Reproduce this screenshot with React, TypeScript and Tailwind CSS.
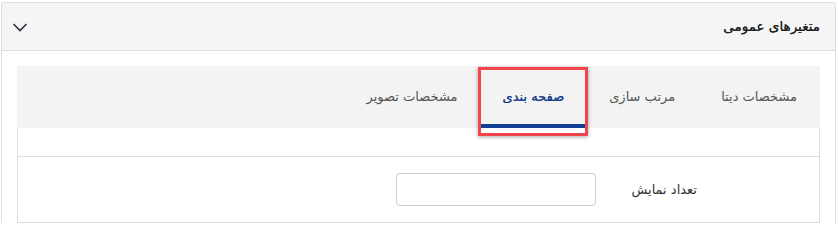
import { useState } from "react";

const tabs = [
  { id: "data", label: "مشخصات دیتا" },
  { id: "sort", label: "مرتب سازی" },
  { id: "paging", label: "صفحه بندی" },
  { id: "image", label: "مشخصات تصویر" },
];

const App = () => {
  const [active, setActive] = useState("paging");
  const [count, setCount] = useState("");

  return (
    <div
      dir="rtl"
      className="min-h-[227px] bg-white pt-[2px] pr-[2px] pl-[1px] text-[#333] font-['DejaVu_Sans',sans-serif]"
    >
      <div className="rounded-t-[3px] border border-b-0 border-[#dddddd]">
        {/* header */}
        <div className="flex h-[48px] items-center justify-between border-b border-[#dddddd] bg-[#f5f5f5] pr-[15px] pl-[10px]">
          <span className="text-[13.5px] text-[#222] [text-shadow:0_0_0.6px_#222]">متغیرهای عمومی</span>
          <svg width="16" height="10" viewBox="0 0 16 10" className="mt-[1px]">
            <polyline
              points="1.5,2 8,8.5 14.5,2"
              fill="none"
              stroke="#2c3140"
              strokeWidth="1.6"
            />
          </svg>
        </div>

        {/* body */}
        <div className="px-[15px] pt-[15px]">
          <div className="flex h-[62px] items-stretch bg-[#f3f3f3]">
            {tabs.map((t) => {
              const isActive = t.id === active;
              return (
                <button
                  key={t.id}
                  onClick={() => setActive(t.id)}
                  className={
                    isActive
                      ? "relative flex items-center border-b-4 border-[#123f96] px-[22px] pt-[4px] text-[13px] text-[#1c3f8f] [text-shadow:0_0_0.5px_#1c3f8f]"
                      : "relative flex items-center border-b-4 border-transparent px-[23px] pt-[4px] text-[13px] text-[#555]"
                  }
                >
                  {t.label}
                  {isActive && (
                    <span className="pointer-events-none absolute -right-[2px] -left-[3px] top-[1px] -bottom-[12px] border-[3px] border-[#f2444b] shadow-[0_1px_4px_rgba(0,0,0,0.35)]" />
                  )}
                </button>
              );
            })}
          </div>

          <div className="border-x border-b border-[#dddddd]">
            <div className="h-[29px] border-b border-[#dddddd]" />
            <div className="flex h-[65px] items-center">
              <label className="w-[223px] shrink-0 pr-[122px] text-[13px] text-[#333]">
                تعداد نمایش
              </label>
              <input
                type="text"
                value={count}
                onChange={(e) => setCount(e.target.value)}
                className="h-[33px] w-[200px] rounded-[4px] border border-[#cccccc] bg-white px-2 text-[13px] outline-none"
              />
            </div>
          </div>
        </div>
      </div>
    </div>
  );
};

export default App;
